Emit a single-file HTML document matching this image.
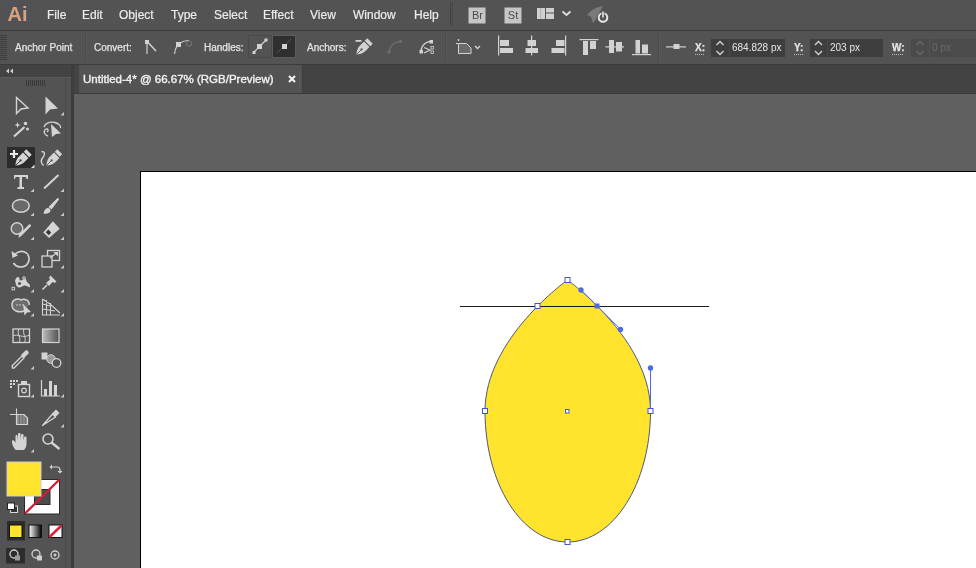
<!DOCTYPE html>
<html><head><meta charset="utf-8">
<style>
*{margin:0;padding:0;box-sizing:border-box}
html,body{width:976px;height:568px;overflow:hidden;background:#5f5f5f;font-family:"Liberation Sans",sans-serif;}
.mi,.ct,.inp,.tt{will-change:transform}
.a{position:absolute}
.mi{position:absolute;top:8px;font-size:12px;color:#ececec;-webkit-text-stroke:0.2px #ececec;white-space:nowrap;line-height:14px}
.ct{position:absolute;top:42px;font-size:10px;color:#e4e4e4;-webkit-text-stroke:0.25px #e4e4e4;white-space:nowrap;line-height:12px}
.inp{position:absolute;font-size:10px;color:#e6e6e6;white-space:nowrap;line-height:12px}
svg{overflow:visible;display:block}
</style></head><body>
<div class="a" style="left:0;top:0;width:976px;height:30px;background:#535353"></div>
<div class="a" style="left:0;top:30px;width:976px;height:1px;background:#393939"></div>
<div class="a" style="left:0;top:31px;width:976px;height:33px;background:#535353"></div>
<div class="a" style="left:0;top:35px;width:7px;height:26px;background:repeating-linear-gradient(#3e3e3e 0 1px,#535353 1px 2px)"></div>
<div class="a" style="left:0;top:64px;width:976px;height:1px;background:#3b3b3b"></div>
<div class="a" style="left:0;top:65px;width:71px;height:503px;background:#535353"></div>
<div class="a" style="left:0;top:65px;width:71px;height:12px;background:#434343"></div>
<div class="a" style="left:0;top:77px;width:71px;height:1px;background:#5a5a5a"></div>
<div class="a" style="left:74px;top:65px;width:5px;height:503px;background:#575757"></div>
<div class="a" style="left:65px;top:78px;width:1px;height:490px;background:#4a4a4a"></div>
<div class="a" style="left:71px;top:65px;width:3px;height:503px;background:#3d3d3d"></div>
<div class="a" style="left:74px;top:65px;width:902px;height:503px;background:#606060"></div>
<div class="a" style="left:74px;top:65px;width:902px;height:28px;background:#434343"></div>
<div class="a" style="left:74px;top:93px;width:902px;height:1px;background:#393939"></div>
<div class="a" style="left:79px;top:65px;width:224px;height:28px;background:#535353"></div>
<div class="a" style="left:299px;top:71px;width:1px;height:17px;background:#5d5d5d"></div>
<div class="a" style="left:302px;top:65px;width:1px;height:28px;background:#3e3e3e"></div>
<div class="a" style="left:140px;top:171px;width:836px;height:397px;background:#fff;border-left:1px solid #000;border-top:1px solid #000"></div>
<!-- inputs -->
<div class="a" style="left:711px;top:39px;width:74px;height:18px;background:#3e3e3e"></div>
<div class="a" style="left:729px;top:40px;width:1px;height:16px;background:#4a4a4a"></div>
<div class="a" style="left:810px;top:39px;width:73px;height:18px;background:#3e3e3e"></div>
<div class="a" style="left:827px;top:40px;width:1px;height:16px;background:#4a4a4a"></div>
<div class="a" style="left:911px;top:39px;width:18px;height:18px;background:#4b4b4b"></div>
<div class="a" style="left:930px;top:39px;width:46px;height:18px;background:#4b4b4b"></div>
<!-- handles buttons -->
<div class="a" style="left:248px;top:35px;width:24px;height:23px;border:1px solid #4a4a4a;background:#535353"></div>
<div class="a" style="left:272px;top:35px;width:24px;height:23px;border:1px solid #5c5c5c;background:#2f2f2f"></div>
<!-- selected tool bg -->
<div class="a" style="left:7px;top:147px;width:28px;height:21px;background:#2c2c2c"></div>
<span class="mi" style="left:47px">File</span>
<span class="mi" style="left:82px">Edit</span>
<span class="mi" style="left:119px">Object</span>
<span class="mi" style="left:171px">Type</span>
<span class="mi" style="left:214px">Select</span>
<span class="mi" style="left:263px">Effect</span>
<span class="mi" style="left:310px">View</span>
<span class="mi" style="left:353px">Window</span>
<span class="mi" style="left:414px">Help</span>
<span class="ct" style="left:15px">Anchor Point</span>
<span class="ct" style="left:94px">Convert:</span>
<span class="ct" style="left:204px">Handles:</span>
<span class="ct" style="left:307px">Anchors:</span>
<span class="ct" style="left:695px;font-weight:bold">X:</span>
<span class="ct" style="left:794px;font-weight:bold">Y:</span>
<span class="ct" style="left:892px;font-weight:bold">W:</span>
<span class="inp" style="left:732px;top:42px">684.828 px</span>
<span class="inp" style="left:830px;top:42px">203 px</span>
<span class="inp" style="left:932px;top:42px;color:#6a6a6a">0 px</span>
<div class="a tt" style="left:83px;top:73px;font-size:11.5px;line-height:13px;-webkit-text-stroke:0.4px #f0f0f0;color:#f0f0f0;white-space:nowrap">Untitled-4* @ 66.67% (RGB/Preview)</div>
<div class="a" style="left:288px;top:75px;width:8px;height:8px;">
<svg width="8" height="8" viewBox="0 0 8 8"><path d="M1,1 L7,7 M7,1 L1,7" stroke="#f2f2f2" stroke-width="2.1"/></svg></div>
<svg class="a" style="left:0;top:0" width="976" height="568" viewBox="0 0 976 568">
<rect x="3" y="1" width="29" height="24" fill="#515256"/>
<text x="7.5" y="20.6" font-size="20" font-weight="bold" font-family="Liberation Sans" fill="#d9a27e">Ai</text>
<rect x="450" y="2" width="1" height="24" fill="#414141"/><rect x="452" y="2" width="1" height="24" fill="#474747"/>
<rect x="468.5" y="7.5" width="17" height="16" fill="#c6c6c6"/>
<text x="477.5" y="19" font-size="11" font-family="Liberation Sans" fill="#4c4c4c" text-anchor="middle">Br</text>
<rect x="504.5" y="7.5" width="17" height="16" fill="#c6c6c6"/>
<text x="513" y="19" font-size="11" font-family="Liberation Sans" fill="#4c4c4c" text-anchor="middle">St</text>
<rect x="537" y="8" width="8" height="11" fill="#d0d0d0"/><rect x="540.5" y="8" width="0.6" height="11" fill="#9a9a9a"/>
<rect x="546" y="8" width="8" height="4.5" fill="#d0d0d0"/><rect x="546" y="13.5" width="8" height="5.5" fill="#d0d0d0"/>
<polyline points="562.5,11.5 566.5,15 570.5,11.5" fill="none" stroke="#e0e0e0" stroke-width="1.8"/>
<path d="M587,15 C592,9 597,7 603,6 C601,10 599,13 597,16 C596,20 594,22 593,23 C592,20 592,18 590,16 Z" fill="#7a7a7a"/>
<circle cx="603" cy="17.5" r="4.3" fill="none" stroke="#e6e6e6" stroke-width="2"/>
<line x1="603" y1="11" x2="603" y2="18" stroke="#535353" stroke-width="3"/>
<line x1="603" y1="11.5" x2="603" y2="17.5" stroke="#e6e6e6" stroke-width="1.6"/>
<g fill="#d2d2d2" stroke="#d2d2d2">
<!-- separators -->
<rect x="85" y="33" width="1" height="29" fill="#4a4a4a" stroke="none"/><rect x="86" y="33" width="1" height="29" fill="#5a5a5a" stroke="none"/>
<rect x="445" y="33" width="1" height="29" fill="#4a4a4a" stroke="none"/><rect x="446" y="33" width="1" height="29" fill="#5a5a5a" stroke="none"/>
<rect x="658" y="33" width="1" height="29" fill="#4a4a4a" stroke="none"/><rect x="659" y="33" width="1" height="29" fill="#5a5a5a" stroke="none"/>
<!-- convert corner -->
<rect x="145" y="40" width="4" height="4" stroke="none"/>
<line x1="147" y1="43" x2="147" y2="54" stroke-width="1.2"/>
<line x1="148" y1="42.5" x2="156" y2="51" stroke-width="1.5"/>
<!-- convert smooth -->
<rect x="176" y="42" width="5" height="5" stroke="none"/>
<path d="M174.5,54 C175,50 176,47.5 177,46" fill="none" stroke-width="1.2"/>
<path d="M180,43 C183,41 186,40.5 189,40.5" fill="none" stroke-width="1.2"/>
<circle cx="189" cy="43.5" r="2.6" fill="none" stroke="#7a7a7a" stroke-width="1"/>
<!-- handles show -->
<line x1="254" y1="52" x2="266" y2="40" stroke-width="1.2"/>
<rect x="257" y="44" width="5" height="5" stroke="none"/>
<rect x="252.5" y="51" width="3" height="3" stroke="none"/>
<rect x="264.5" y="38.5" width="3" height="3" stroke="none"/>
<!-- handles hide -->
<line x1="277" y1="53" x2="291" y2="39" stroke="#555" stroke-width="1"/>
<rect x="282" y="44" width="5" height="5" stroke="none"/>
<!-- pen minus -->
<rect x="355.5" y="40" width="6" height="1.8" stroke="none"/>
<g transform="translate(341,-111)">
<path d="M15.5,165.5 C15.5,162 16.5,158.5 19.5,156 L23,152.6 L28.4,158 L25,161.5 C22.5,164 19,165.5 15.5,165.5 Z" stroke="none"/>
<path d="M23.8,151.8 L26.3,149.3 L31.7,154.7 L29.2,157.2 Z" stroke="none"/>
<line x1="15.8" y1="165.2" x2="20.5" y2="160.5" stroke="#535353" stroke-width="0.9"/>
<circle cx="20.6" cy="160.4" r="1.1" fill="#535353" stroke="none"/>
</g>
<!-- connect faded -->
<path d="M389,52 C390,46 394,42 400,41.5" fill="none" stroke="#6c6c6c" stroke-width="1.3"/>
<circle cx="389" cy="52" r="1.8" fill="#6c6c6c" stroke="none"/><circle cx="400.5" cy="41.5" r="1.8" fill="#6c6c6c" stroke="none"/>
<!-- cut path -->
<rect x="419.5" y="50" width="3.5" height="3.5" stroke="none"/>
<path d="M421,50 C422,45 426,42 430,41.5" fill="none" stroke-width="1.5"/>
<rect x="429.5" y="40" width="3.5" height="3.5" stroke="none"/>
<path d="M424,47.5 L430,50 L424,53" fill="none" stroke-width="1.2"/>
<rect x="431" y="46.5" width="2.5" height="2.5" fill="none" stroke-width="0.8"/>
<rect x="431" y="51" width="2.5" height="2.5" fill="none" stroke-width="0.8"/>
<!-- transform -->
<path d="M458.5,43.5 L466.5,43.5 L471,48 L471,53.5 L458.5,53.5 Z" fill="#6a6a6a" stroke-width="1"/>
<circle cx="458.5" cy="40" r="0.9" stroke="none"/><line x1="456" y1="43.5" x2="458" y2="43.5" stroke-width="1"/>
<polyline points="475,46 477.5,48.5 480,46" fill="none" stroke="#cfcfcf" stroke-width="1.5"/>
<!-- align horizontal -->
<rect x="498" y="35.5" width="1.2" height="20" stroke="none"/>
<rect x="500" y="40" width="9" height="6" stroke="none"/><rect x="500" y="48" width="13" height="5" stroke="none"/>
<rect x="531" y="35.5" width="1.2" height="20" stroke="none"/>
<rect x="527.5" y="40" width="8.5" height="6" stroke="none"/><rect x="525.5" y="48" width="12.5" height="5" stroke="none"/>
<rect x="565" y="35.5" width="1.2" height="20" stroke="none"/>
<rect x="556" y="40" width="8.5" height="6" stroke="none"/><rect x="551.5" y="48" width="13" height="5" stroke="none"/>
<!-- align vertical -->
<rect x="579.5" y="39" width="19" height="1.2" stroke="none"/>
<rect x="583" y="41" width="5" height="14" stroke="none"/><rect x="590" y="41" width="6" height="8" stroke="none"/>
<rect x="605.5" y="46.3" width="18.5" height="1.2" stroke="none"/>
<rect x="609" y="40" width="5" height="13" stroke="none"/><rect x="616" y="42" width="6" height="9.5" stroke="none"/>
<rect x="632" y="54" width="19" height="1.2" stroke="none"/>
<rect x="635.5" y="40" width="4.5" height="13.5" stroke="none"/><rect x="642" y="44.5" width="6" height="9" stroke="none"/>
<!-- ref point -->
<rect x="666" y="46.3" width="20" height="1.2" stroke="none"/>
<rect x="673.5" y="44" width="6" height="5" stroke="none"/>
<!-- dotted underlines -->
<line x1="695" y1="54.5" x2="705" y2="54.5" stroke="#bdbdbd" stroke-width="1" stroke-dasharray="1,1"/>
<line x1="794" y1="54.5" x2="803" y2="54.5" stroke="#bdbdbd" stroke-width="1" stroke-dasharray="1,1"/>
<line x1="892" y1="54.5" x2="904" y2="54.5" stroke="#bdbdbd" stroke-width="1" stroke-dasharray="1,1"/>
<!-- spinners -->
<polyline points="716.5,45 720,41.5 723.5,45" fill="none" stroke-width="1.4"/>
<polyline points="716.5,51 720,54.5 723.5,51" fill="none" stroke-width="1.4"/>
<polyline points="815,45 818.5,41.5 822,45" fill="none" stroke-width="1.4"/>
<polyline points="815,51 818.5,54.5 822,51" fill="none" stroke-width="1.4"/>
<polyline points="916.5,45 920,41.5 923.5,45" fill="none" stroke="#6a6a6a" stroke-width="1.4"/>
<polyline points="916.5,51 920,54.5 923.5,51" fill="none" stroke="#6a6a6a" stroke-width="1.4"/>
</g>
<g fill="#d4d4d4" stroke="#d4d4d4">
<!-- collapse arrows -->
<path d="M6,71 L9,68.5 L9,73.5 Z M10,71 L13,68.5 L13,73.5 Z" stroke="none" fill="#cfcfcf"/>
<!-- grip -->
<g stroke="#3a3a3a" stroke-width="1">
<line x1="26.5" y1="80" x2="26.5" y2="86"/><line x1="28.5" y1="80" x2="28.5" y2="86"/><line x1="30.5" y1="80" x2="30.5" y2="86"/><line x1="32.5" y1="80" x2="32.5" y2="86"/><line x1="34.5" y1="80" x2="34.5" y2="86"/><line x1="36.5" y1="80" x2="36.5" y2="86"/><line x1="38.5" y1="80" x2="38.5" y2="86"/><line x1="40.5" y1="80" x2="40.5" y2="86"/><line x1="42.5" y1="80" x2="42.5" y2="86"/><line x1="44.5" y1="80" x2="44.5" y2="86"/>
</g>
<!-- hollow arrow -->
<path d="M16.5,97.5 L28,108 L21,109 L16.5,113.5 Z" fill="none" stroke-width="1.4" stroke-linejoin="miter"/>
<!-- filled arrow -->
<path d="M45.5,96.5 L58,108.5 L50,109.5 L45.5,114.5 Z" stroke="none"/>
<!-- wand -->
<line x1="14" y1="136.5" x2="24.5" y2="127" stroke-width="2.2"/>
<path d="M17.5,122 L18.3,124.2 L20.5,125 L18.3,125.8 L17.5,128 L16.7,125.8 L14.5,125 L16.7,124.2 Z" stroke="none"/>
<circle cx="25.5" cy="123.5" r="1.8" stroke="none"/><circle cx="27.5" cy="129" r="1.5" stroke="none"/>
<!-- lasso -->
<path d="M48,136 C44,135 43,131 46,129 C48,128 49,131 47,132 M44,127 C45,123 50,121.5 55,122.5 C59,123.5 61,126 60.5,128" fill="none" stroke-width="1.3"/>
<path d="M51,124 L61,133.5 L56,134 L52,137 Z" stroke="none"/>
<!-- selected: add anchor pen -->
<path d="M10,154 L18,154 M14,150 L14,158" stroke="#e8e8e8" stroke-width="2.2"/>
<path d="M15.5,165.5 C15.5,162 16.5,158.5 19.5,156 L23,152.6 L28.4,158 L25,161.5 C22.5,164 19,165.5 15.5,165.5 Z" stroke="none"/>
<path d="M23.8,151.8 L26.3,149.3 L31.7,154.7 L29.2,157.2 Z" stroke="none"/>
<line x1="15.8" y1="165.2" x2="20.5" y2="160.5" stroke="#3a3a3a" stroke-width="0.9"/>
<circle cx="20.6" cy="160.4" r="1.1" fill="#3a3a3a" stroke="none"/>
<!-- curvature pen -->
<path d="M43.5,165.5 C41,163 41,160 42.5,158 C44,156 45,154 44,152.5 C43.5,151.5 42.5,151.5 41.5,152" fill="none" stroke-width="1.4"/>
<path d="M46.5,165.5 C46.5,162 47.5,158.5 50.5,156 L54,152.6 L59.4,158 L56,161.5 C53.5,164 50,165.5 46.5,165.5 Z" stroke="none"/>
<path d="M54.8,151.8 L57.3,149.3 L62.2,154.2 L59.7,156.7 Z" stroke="none"/>
<line x1="46.8" y1="165.2" x2="51.5" y2="160.5" stroke="#535353" stroke-width="0.9"/>
<circle cx="51.6" cy="160.4" r="1.1" fill="#535353" stroke="none"/>
<!-- T -->
<path d="M14,175 L28,175 L28,179 L26.5,179 L26,177 L22,177 L22,187 L24,187 L24,189 L17.5,189 L17.5,187 L19.5,187 L19.5,177 L15.5,177 L15,179 L14,179 Z" stroke="none"/>
<!-- line -->
<line x1="44" y1="188.5" x2="58.5" y2="175" stroke-width="2"/>
<!-- ellipse -->
<ellipse cx="20.8" cy="205.8" rx="8.4" ry="6.4" fill="#6a6a6a" stroke-width="1.5"/>
<!-- brush -->
<path d="M43.5,213.8 C44,211 45,208.5 47.5,208 C49,207.8 50.5,209 50.5,210.5 C50.5,213 47,213.8 43.5,213.8 Z" stroke="none"/>
<path d="M48.5,207 L57,198.5 C58,197.5 59.5,198.5 58.8,199.7 L51.5,209.5 Z" stroke="none"/>
<!-- blob brush -->
<circle cx="17" cy="228.5" r="5.8" fill="#6a6a6a" stroke-width="1.4"/>
<path d="M18.5,237.8 L19,234.5 L29,224.5 C30,223.5 31.8,225.3 30.8,226.3 L21,236.2 Z" stroke="none"/>
<!-- eraser -->
<path d="M43.2,232.5 L52.9,221.3 L59.7,228.7 L49.1,238 Z" stroke="none"/>
<path d="M45.8,232.2 L48.3,229.6 L51.2,232.6 L48.8,235.2 Z" fill="#3a3a3a" stroke="none"/>
<!-- rotate -->
<path d="M14,256 C16,251.5 22,250 26.5,253 C30,256 30,262 26,265.5 C22,268 16,267.5 13.5,263" fill="none" stroke-width="1.6"/>
<path d="M11.5,251 L12.5,258 L18,255.5 Z" stroke="none"/>
<!-- scale -->
<rect x="47.5" y="250.5" width="12" height="10" fill="none" stroke-width="1.3"/>
<rect x="42" y="256" width="10" height="11" fill="#535353" stroke-width="1.3"/>
<path d="M50,258 L57,252.5" stroke-width="1.2"/><path d="M53.5,252 L58,252 L58,256.5 Z" stroke="none"/>
<!-- warp -->
<path d="M15,281 C15.5,278 17.5,276 19,277.5 C20,279 19,281 21,280.5 C23,280 24,278 25.5,279 C27,280 26,282 28,283 C30,284 30.5,286 29.5,287.5 C27,286 25,285 23,286 C21,287.5 18.5,288 17,286.5 C15.5,285 16,283 15,281 Z" stroke="none"/>
<circle cx="19.5" cy="283.5" r="1.6" fill="#535353" stroke="none"/><circle cx="24" cy="278" r="1.3" fill="#535353" stroke="#d4d4d4" stroke-width="1"/>
<rect x="12" y="287.3" width="2.6" height="2.6" fill="none" stroke-width="0.9"/>
<!-- puppet pin -->
<path d="M50.5,275.5 L56.5,281.5 L54.5,283 L52.5,282 L49,286 L46,283 L50,279.5 L49,277.5 Z" stroke="none"/>
<line x1="47" y1="285" x2="42.5" y2="289.5" stroke-width="1.6"/>
<!-- shape builder -->
<path d="M24,311 C19,313 12,311 12,305 C12,299 18,298 21,300 C24,298 30,300 29,305" fill="#6d6d6d" stroke-width="1.5"/>
<circle cx="17" cy="305" r="0.8" stroke="none"/><circle cx="20" cy="305" r="0.8" stroke="none"/><circle cx="23" cy="305" r="0.8" stroke="none"/>
<path d="M23,304 L31,312 L27,312.5 L24.5,315.5 Z" stroke="none"/>
<!-- perspective grid -->
<g fill="none" stroke-width="1.1">
<path d="M42.5,299 L42.5,315 L60,315 M42.5,299 L50,304 L60,313 M46.5,300 L46.5,315 M50.5,303 L50.5,315 M42.5,304 L50,306 M42.5,309 L55,311"/>
</g>
<!-- mesh -->
<rect x="13" y="329" width="16.5" height="13.5" fill="none" stroke-width="1.3"/>
<path d="M13,336 C18,333 22,339 29.5,335 M19,329 C16,334 22,337 19,342.5 M24,329 C22,334 27,337 24.5,342.5" fill="none" stroke-width="1"/>
<!-- gradient -->
<defs><linearGradient id="gt" x1="0" x2="1"><stop offset="0" stop-color="#bcbcbc"/><stop offset="1" stop-color="#505050"/></linearGradient>
<linearGradient id="gs" x1="0" x2="1"><stop offset="0" stop-color="#ffffff"/><stop offset="1" stop-color="#000000"/></linearGradient></defs>
<rect x="42.5" y="329" width="16.5" height="13.5" fill="url(#gt)" stroke-width="1.2"/>
<!-- eyedropper -->
<path d="M12.5,368 L12,366 L22,356 L24,358 L14,368 Z" fill="none" stroke-width="1.3"/>
<path d="M21,355 L25.5,350.5 C27,349.5 29.5,352 28.5,353.5 L24,358 Z" stroke="none"/>
<!-- blend -->
<rect x="41.5" y="352.5" width="6" height="7" stroke="none"/>
<circle cx="51" cy="359" r="4.3" fill="#9a9a9a" stroke-width="1"/>
<circle cx="56.5" cy="363" r="4.3" fill="#535353" stroke-width="1.3"/>
<!-- symbol sprayer -->
<g stroke="none"><rect x="10" y="380" width="2" height="2"/><rect x="13" y="380" width="2" height="2"/><rect x="16" y="380" width="2" height="2"/><rect x="10" y="383" width="2" height="2"/><rect x="13" y="383" width="2" height="2"/><rect x="10" y="386" width="2" height="2"/></g>
<rect x="18.5" y="384.5" width="11" height="12" fill="none" stroke-width="1.4"/>
<rect x="21" y="381" width="6" height="3" stroke="none"/>
<circle cx="24" cy="390.5" r="2.3" fill="none" stroke-width="1.2"/>
<!-- column graph -->
<path d="M41.5,380 L41.5,396 L60,396" fill="none" stroke-width="1.2"/>
<rect x="44" y="389" width="3" height="7" stroke="none"/><rect x="49" y="381" width="3" height="15" stroke="none"/><rect x="54" y="385" width="3" height="11" stroke="none"/>
<!-- artboard -->
<path d="M10,414.5 L16,414.5 M16.5,408.5 L16.5,414" fill="none" stroke-width="1.1"/>
<path d="M16.5,414.5 L24,414.5 L27.5,418 L27.5,424.5 L16.5,424.5 Z" fill="#8a8a8a" stroke-width="1.2"/>
<path d="M19.5,415 L19.5,424 M22.5,415 L22.5,424 M25.5,417 L25.5,424" stroke="#6a6a6a" stroke-width="0.8"/>
<!-- knife -->
<path d="M42.5,425.5 L52.5,414 L55.5,417 Z" fill="none" stroke-width="1.3" stroke-linejoin="round"/>
<path d="M52,413.5 L56,409.5 L59.5,413 L55.5,417 Z" stroke="none"/>
<!-- hand -->
<path d="M15.5,450 C13,447 11.5,443 12,441 C12.5,440 14,440 15,442 L15.5,443 L15.5,436 C15.5,434.5 17.5,434.5 17.5,436 L17.8,440.5 L18,434 C18,432.5 20.5,432.5 20.5,434 L20.5,440.5 L21,435 C21,433.5 23.5,433.5 23.5,435 L23.5,441 L24,437.5 C24,436 26.5,436 26.5,437.5 L26.5,444 C26.5,447 25,449 24,450 Z" stroke="none"/>
<!-- zoom -->
<circle cx="48" cy="439" r="5" fill="none" stroke-width="1.6"/>
<line x1="51.5" y1="442.5" x2="59.5" y2="449" stroke-width="2.4"/>
<!-- corner triangles -->
<g stroke="none" fill="#c8c8c8">
<path d="M64,112 L64,115.5 L60.5,115.5 Z"/>
<path d="M34.5,164.5 L34.5,168 L31,168 Z" fill="#e0e0e0"/>
<path d="M34,188.5 L34,192 L30.5,192 Z"/><path d="M64,188.5 L64,192 L60.5,192 Z"/>
<path d="M34,212.5 L34,216 L30.5,216 Z"/><path d="M64,212.5 L64,216 L60.5,216 Z"/>
<path d="M34,236.5 L34,240 L30.5,240 Z"/><path d="M64,236.5 L64,240 L60.5,240 Z"/>
<path d="M34,265 L34,268.5 L30.5,268.5 Z"/><path d="M64,265 L64,268.5 L60.5,268.5 Z"/>
<path d="M34,289 L34,292.5 L30.5,292.5 Z"/><path d="M64,289 L64,292.5 L60.5,292.5 Z"/>
<path d="M34,313 L34,316.5 L30.5,316.5 Z"/><path d="M64,313 L64,316.5 L60.5,316.5 Z"/>
<path d="M34,366 L34,369.5 L30.5,369.5 Z"/>
<path d="M34,394 L34,397.5 L30.5,397.5 Z"/><path d="M64,394 L64,397.5 L60.5,397.5 Z"/>
<path d="M64,424 L64,427.5 L60.5,427.5 Z"/>
<path d="M34,449 L34,452.5 L30.5,452.5 Z"/>
</g>
<!-- fill / stroke -->
<rect x="24.5" y="479.5" width="35" height="34.5" fill="#ffffff" stroke="#2a2a2a" stroke-width="1"/>
<rect x="34.5" y="489.5" width="15.5" height="15" fill="#4c4c4c" stroke="#2a2a2a" stroke-width="1"/>
<line x1="25" y1="513.5" x2="59.5" y2="479.5" stroke="#d81a30" stroke-width="2.3"/>
<rect x="7" y="462" width="34" height="34" fill="#ffe32c" stroke="#d0d0d0" stroke-width="1"/>
<!-- swap -->
<path d="M51,467 L57,467 C59,467 60,468 60,470 L60,472" fill="none" stroke-width="1.2"/>
<path d="M49.5,467 L52,464.5 L52,469.5 Z M60,473.5 L57.5,471 L62.5,471 Z" stroke="none"/>
<!-- default fill stroke -->
<rect x="10.5" y="506" width="7" height="6.5" fill="#333" stroke="#d8d8d8" stroke-width="1"/>
<rect x="7.5" y="503" width="7" height="6.5" fill="#ffffff" stroke="#222" stroke-width="1"/>
<!-- color modes -->
<rect x="7" y="521" width="18" height="19.5" fill="#2c2c2c" stroke="none"/>
<rect x="9.5" y="525" width="12.5" height="12.5" fill="#ffe32c" stroke="#111" stroke-width="1"/>
<rect x="29" y="525" width="12.5" height="12.5" fill="url(#gs)" stroke="#111" stroke-width="1"/>
<rect x="49" y="525" width="13" height="12.5" fill="#ffffff" stroke="#111" stroke-width="1"/>
<line x1="49.5" y1="537" x2="61.5" y2="525.5" stroke="#e0203a" stroke-width="2.5"/>
<!-- draw modes -->
<rect x="6" y="548" width="19" height="15.5" fill="#2c2c2c" stroke="none"/>
<circle cx="14" cy="554" r="4" fill="none" stroke="#cfcfcf" stroke-width="1.3"/><rect x="15" y="555.5" width="5" height="5" fill="#9a9a9a" stroke="none"/>
<circle cx="36" cy="554" r="4" fill="none" stroke="#cfcfcf" stroke-width="1.3"/><rect x="37" y="555.5" width="5" height="5" fill="#cfcfcf" stroke="none"/>
<circle cx="55" cy="555" r="4" fill="none" stroke="#cfcfcf" stroke-width="1.3"/><circle cx="55" cy="555" r="1.5" fill="#cfcfcf" stroke="none"/>
</g>
<path d="M567.5,280 C567.5,280 485,338.7 485,411 C485,483.3 521.5,542 567.5,542 C613.5,542 650.5,483.3 650.5,411 C650.5,368 621,329.8 597,305.9 C581,289.6 567.5,280 567.5,280 Z" fill="#ffe32c" stroke="#4f5878" stroke-width="1"/>
<line x1="460" y1="306.5" x2="709" y2="306.5" stroke="#1e1e1e" stroke-width="1"/>
<g stroke="#4d6be8" fill="#4d6be8">
<line x1="581" y1="289.8" x2="621" y2="329.8" stroke-width="1"/>
<line x1="650.5" y1="368" x2="650.5" y2="411" stroke-width="1"/>
<circle cx="581" cy="290" r="2.7" stroke="none"/>
<circle cx="620.5" cy="329.5" r="2.7" stroke="none"/>
<circle cx="650.5" cy="368" r="2.7" stroke="none"/>
<rect x="594.5" y="303.5" width="5" height="5" stroke="none"/>
</g>
<g fill="#ffffff" stroke="#4656c4" stroke-width="1">
<rect x="565" y="277.5" width="5" height="5"/>
<rect x="535" y="303.5" width="5" height="5"/>
<rect x="482.5" y="408.5" width="5" height="5"/>
<rect x="648" y="408.5" width="5" height="5"/>
<rect x="565" y="539.5" width="5" height="5"/>
<rect x="565.5" y="409.5" width="3.5" height="3.5"/>
</g>
</svg>
</body></html>
